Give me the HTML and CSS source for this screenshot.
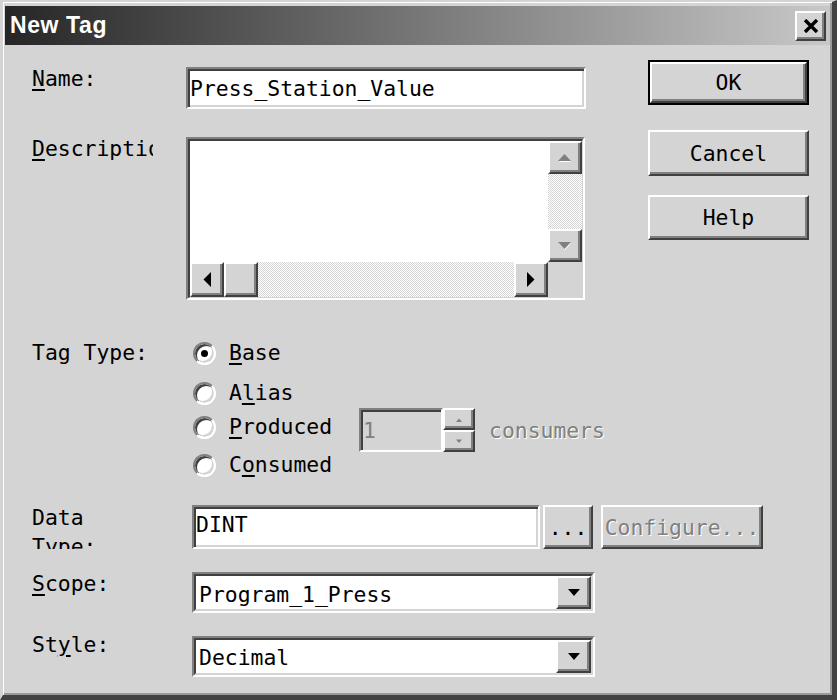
FILE: index.html
```html
<!DOCTYPE html>
<html>
<head>
<meta charset="utf-8">
<title>New Tag</title>
<link rel="stylesheet" href="styles.css">
</head>
<body>
<div class="dialog">
  <div class="titlebar">
    <span class="title">New Tag</span>
    <div class="close raised">
      <svg width="16" height="14" viewBox="0 0 16 14"><path d="M2 1 L14 13 M14 1 L2 13" stroke="#000" stroke-width="3.4" fill="none"/></svg>
    </div>
  </div>
  <div class="body">
    <div class="form">
      <div class="row row-name">
        <div class="lbl w154"><u>N</u>ame:</div>
        <div class="field name-field">Press_Station_Value</div>
      </div>
      <div class="row row-desc">
        <div class="lbl w154"><span class="clip"><u>D</u>escription:</span></div>
        <div class="descbox">
          <div class="descinner">
            <div class="textarea"></div>
            <div class="vscroll">
              <div class="sbtn raised"><svg width="16" height="9" viewBox="0 0 16 9"><path d="M2 9 L8 3 L14 9Z" fill="#fff"/><path d="M1 8 L7.5 1 L14 8Z" fill="#808080"/></svg></div>
              <div class="track"></div>
              <div class="sbtn raised"><svg width="16" height="9" viewBox="0 0 16 9"><path d="M2 2 L14 2 L8 9Z" fill="#fff"/><path d="M1 1 L14 1 L7.5 8Z" fill="#808080"/></svg></div>
            </div>
            <div class="hscroll">
              <div class="sbtn raised"><svg width="8" height="15" viewBox="0 0 8 15"><path d="M8 0 L0.5 7.5 L8 15Z" fill="#000"/></svg></div>
              <div class="sbtn raised"></div>
              <div class="track"></div>
              <div class="sbtn raised"><svg width="8" height="15" viewBox="0 0 8 15"><path d="M0 0 L7.5 7.5 L0 15Z" fill="#000"/></svg></div>
            </div>
            <div class="corner"></div>
          </div>
        </div>
      </div>
      <div class="row row-tag">
        <div class="lbl w161 tag-lbl">Tag Type:</div>
        <div class="radios">
          <div class="radio-row r-base"><div class="opt"><span class="rb on"></span><span><u>B</u>ase</span></div></div>
          <div class="radio-row r-alias"><div class="opt"><span class="rb"></span><span>A<u>l</u>ias</span></div></div>
          <div class="radio-row r-prod">
            <div class="opt opt-prod"><span class="rb"></span><span><u>P</u>roduced</span></div>
            <div class="spin">
              <div class="field spin-edit">1</div>
              <div class="spin-btns">
                <div class="spbtn raised"><svg width="8" height="5" viewBox="0 0 8 5"><path d="M1 5 L4 1.5 L7 5Z" fill="#808080"/></svg></div>
                <div class="spbtn raised"><svg width="8" height="5" viewBox="0 0 8 5"><path d="M1 0.5 L7 0.5 L4 4Z" fill="#808080"/></svg></div>
              </div>
            </div>
            <span class="disabled consumers">consumers</span>
          </div>
          <div class="radio-row r-cons"><div class="opt"><span class="rb"></span><span>C<u>o</u>nsumed</span></div></div>
        </div>
      </div>
      <div class="row row-dtype">
        <div class="lbl w160 dtype-lbl">Data<br>Type:</div>
        <div class="field dtype-field">DINT</div>
        <div class="btn raised dots">...</div>
        <div class="btn raised configure"><span class="disabled">Configure...</span></div>
      </div>
      <div class="row row-scope">
        <div class="lbl w160"><u>S</u>cope:</div>
        <div class="combo">
          <div class="combo-in">
            <span class="combo-text scope-text">Program_1_Press</span>
            <div class="cbtn raised"><svg width="12" height="7" viewBox="0 0 12 7"><path d="M0 0 H12 L6 7Z" fill="#000"/></svg></div>
          </div>
        </div>
      </div>
      <div class="row row-style">
        <div class="lbl w160 style-lbl">St<u>y</u>le:</div>
        <div class="combo">
          <div class="combo-in">
            <span class="combo-text style-text">Decimal</span>
            <div class="cbtn raised"><svg width="12" height="7" viewBox="0 0 12 7"><path d="M0 0 H12 L6 7Z" fill="#000"/></svg></div>
          </div>
        </div>
      </div>
    </div>
    <div class="buttons">
      <div class="default"><div class="btn raised pbtn">OK</div></div>
      <div class="btn raised pbtn cancel">Cancel</div>
      <div class="btn raised pbtn help">Help</div>
    </div>
  </div>
</div>
</body>
</html>
```

FILE: styles.css
```css
html, body {
  margin: 0;
  padding: 0;
  background: #d4d4d4;
}

body {
  font-family: "DejaVu Sans Mono", "Liberation Mono", monospace;
  font-size: 21.4px;
  color: #000;
}

u {
  text-decoration: underline;
  text-decoration-thickness: 2px;
  text-underline-offset: 3px;
}

.dialog {
  width: 837px;
  height: 700px;
  box-sizing: border-box;
  border-style: solid;
  border-width: 2px 5px 5px 3px;
  border-color: #d4d4d4 #424242 #424242 #d4d4d4;
  box-shadow: inset 1px 1px 0 #fff, inset -2px -2px 0 #9a9a9a;
  padding: 4px 2px 0 2px;
  background: #d4d4d4;
  display: flex;
  flex-direction: column;
  overflow: hidden;
}

/* title bar */
.titlebar {
  height: 39px;
  flex: none;
  background: linear-gradient(90deg, #262626 0%, #c8c8c8 100%);
  display: flex;
  align-items: center;
  justify-content: space-between;
  padding: 0 4px 0 5px;
}

.title {
  color: #fff;
  font-family: "Liberation Sans", Arial, sans-serif;
  font-weight: bold;
  font-size: 23px;
  letter-spacing: 0.6px;
}

.close {
  width: 27px;
  height: 26px;
  display: flex;
  align-items: center;
  justify-content: center;
}

/* generic 3D */
.raised {
  background: #d4d4d4;
  border: 2px solid;
  border-color: #fff #404040 #404040 #fff;
  box-shadow: inset -2px -2px 0 #808080;
}

.field {
  box-sizing: border-box;
  background: #fff;
  border: 2px solid;
  border-color: #808080 #fff #fff #808080;
  box-shadow: inset 2px 2px 0 #404040, inset -2px -2px 0 #d4d4d4;
  display: flex;
  align-items: center;
  white-space: nowrap;
}

.disabled {
  color: #808080;
  text-shadow: 1px 1px 0 #fff;
}

/* body layout */
.body {
  display: flex;
  padding: 0 21px 0 27px;
}

.form {
  flex: 1 1 0;
  min-width: 0;
  display: flex;
  flex-direction: column;
}

.row {
  display: flex;
  align-items: flex-start;
}

.row > *,
.radio-row > * {
  flex: none;
}

.lbl {
  line-height: 24px;
  white-space: nowrap;
}

.w154 { width: 154px; }
.w160 { width: 160px; }
.w161 { width: 161px; }

.clip {
  display: block;
  width: 121px;
  overflow: hidden;
}

/* name */
.row-name { margin-top: 22px; }

.name-field {
  width: 400px;
  height: 42px;
  padding-left: 2px;
}

/* description */
.row-desc { margin-top: 28px; }

.descbox {
  width: 399px;
  height: 163px;
  box-sizing: border-box;
  border: 2px solid;
  border-color: #808080 #fff #fff #808080;
}

.descinner {
  height: 100%;
  box-sizing: border-box;
  border: 2px solid;
  border-color: #404040 #d4d4d4 #d4d4d4 #404040;
  border-width: 2px 1px 1px 2px;
  display: grid;
  grid-template-columns: 1fr 34px;
  grid-template-rows: 1fr 35px;
  background: #fff;
}

.textarea { background: #fff; }

.vscroll {
  display: flex;
  flex-direction: column;
}

.hscroll {
  display: flex;
}

.sbtn {
  box-sizing: border-box;
  flex: none;
  width: 34px;
  height: 33px;
  display: flex;
  align-items: center;
  justify-content: center;
}

.hscroll .sbtn { height: 35px; }

.track {
  flex: 1;
  background-color: #d4d4d4;
  background-image: repeating-conic-gradient(#fff 0 25%, #d4d4d4 0 50%);
  background-size: 2px 2px;
}

.corner { background: #d4d4d4; }

/* tag type */
.row-tag { margin-top: 34px; }

.tag-lbl { padding-top: 7px; }

.radios {
  display: flex;
  flex-direction: column;
}

.radio-row {
  display: flex;
  align-items: center;
}

.r-base { height: 38px; }
.r-alias { height: 30px; padding-top: 6px; }
.r-prod { height: 44px; }
.r-cons { height: 26px; }

.opt {
  display: flex;
  align-items: center;
  line-height: 24px;
}

.opt-prod {
  width: 166px;
  margin-bottom: 6px;
}

.rb {
  flex: none;
  width: 19px;
  height: 19px;
  border: 2px solid;
  border-color: #808080 #fff #fff #808080;
  border-radius: 50%;
  background: #fff;
  box-shadow: inset 2px 2px 0 #404040, inset -2px -2px 0 #d4d4d4;
  margin-right: 13px;
  display: flex;
  align-items: center;
  justify-content: center;
}

.rb.on::after {
  content: "";
  width: 7px;
  height: 7px;
  border-radius: 50%;
  background: #000;
}

.spin {
  display: flex;
  height: 44px;
}

.spin-edit {
  width: 84px;
  height: 44px;
  background: #d4d4d4;
  color: #808080;
  padding-left: 2px;
}

.spin-btns {
  display: flex;
  flex-direction: column;
}

.spbtn {
  box-sizing: border-box;
  width: 32px;
  height: 22px;
  display: flex;
  align-items: center;
  justify-content: center;
}

.consumers {
  margin-left: 14px;
}

/* data type */
.row-dtype { margin-top: 27px; }

.dtype-lbl {
  line-height: 29px;
  height: 46px;
  margin-top: -2px;
  overflow: hidden;
}

.dtype-field {
  width: 348px;
  height: 44px;
  padding-left: 2px;
  padding-bottom: 6px;
}

.btn {
  box-sizing: border-box;
  display: flex;
  align-items: center;
  justify-content: center;
  white-space: nowrap;
}

.dots {
  width: 50px;
  height: 44px;
  margin-left: 3px;
}

.configure {
  width: 162px;
  height: 44px;
  margin-left: 8px;
}

/* combos */
.row-scope { margin-top: 23px; }
.row-style { margin-top: 23px; }

.style-lbl { margin-top: -3px; }

.combo {
  width: 403px;
  height: 41px;
  box-sizing: border-box;
  border: 2px solid;
  border-color: #808080 #fff #fff #808080;
}

.combo-in {
  height: 100%;
  box-sizing: border-box;
  border: 2px solid;
  border-color: #404040 #d4d4d4 #d4d4d4 #404040;
  background: #fff;
  display: flex;
  align-items: center;
  justify-content: space-between;
}

.combo-text {
  padding-left: 3px;
  line-height: 24px;
}

.scope-text { padding-top: 4px; }
.style-text { padding-top: 3px; }

.cbtn {
  box-sizing: border-box;
  align-self: stretch;
  width: 35px;
  display: flex;
  align-items: center;
  justify-content: center;
}

/* right buttons */
.buttons {
  flex: none;
  width: 161px;
  display: flex;
  flex-direction: column;
  padding-top: 15px;
}

.default {
  border: 2px solid #000;
  height: 45px;
  box-sizing: border-box;
  display: flex;
}

.default .pbtn {
  flex: 1;
  height: auto;
}

.pbtn {
  height: 45px;
}

.cancel {
  margin-top: 25px;
  height: 46px;
}

.help {
  margin-top: 19px;
}
```
